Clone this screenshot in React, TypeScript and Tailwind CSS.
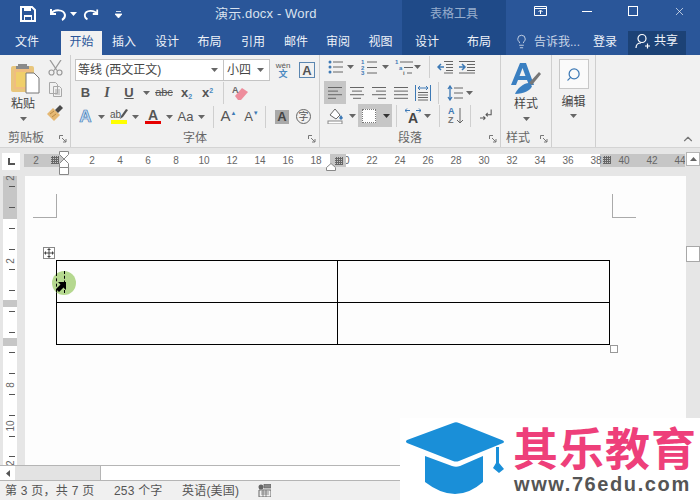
import { ChevronUp, Lightbulb, Search, X } from "lucide-react";

const tabs = [
  { name: "插入", w: "w-[44px]" },
  { name: "设计", w: "w-[42px]" },
  { name: "布局", w: "w-[43px]" },
  { name: "引用", w: "w-[44px]" },
  { name: "邮件", w: "w-[42px]" },
  { name: "审阅", w: "w-[42px]" },
  { name: "视图", w: "w-[43px]" },
];

const rulerNumbers = ["2", "", "2", "4", "6", "8", "10", "12", "14", "16", "18", "20", "22", "24", "26", "28", "30", "32", "34", "36", "38", "40", "42", "44"];

function Caret({ color = "#666666" }: { color?: string }) {
  return (
    <svg width="7" height="4" viewBox="0 0 7 4">
      <path d="M0 0h7L3.5 4z" fill={color} />
    </svg>
  );
}

function Launcher() {
  return (
    <svg width="8" height="8" viewBox="0 0 8 8" className="absolute right-[3px] top-[6px]">
      <path d="M.5 4V.5H4" fill="none" stroke="#777777" />
      <path d="M3 3l4 4M7 4v3H4" fill="none" stroke="#777777" />
    </svg>
  );
}

function Sep({ className = "" }: { className?: string }) {
  return <div className={`h-[22px] w-px bg-[#cfcfcf] ${className}`} />;
}

function Bars({ lines, color = "#666666" }: { lines: number[][]; color?: string }) {
  return (
    <svg width="16" height="14" viewBox="0 0 16 14">
      {lines.map(([a, b], i) => (
        <rect key={i} x={a} y={1 + i * 3.6} width={b - a} height="1" fill={color} />
      ))}
    </svg>
  );
}

function GridMark() {
  return (
    <svg width="8" height="8" viewBox="0 0 8 8">
      <path d="M1.5 0v8M3.5 0v8M5.5 0v8M7.5 0v8M0 1.5h8M0 3.5h8M0 5.5h8M0 7.5h8" stroke="#666666" strokeWidth="1" />
    </svg>
  );
}

function Logo() {
  return (
    <div className="absolute bottom-0 right-0 flex h-[82px] w-[300px] bg-white">
      <svg width="108" height="82" viewBox="0 0 108 82" className="ml-[3px] shrink-0">
        <path d="M4 22Q2 23.500 4 25L50 43Q53 44 56 43L100 25Q102 24 100 22.500L56 5Q53 3.500 50 5z" fill="#1a8fd8" />
        <path d="M22 38L49 48Q53 49.500 57 48L80 38V64Q53 88 22 64z" fill="#1a8fd8" />
        <path d="M93 29h3v16l5 6-5 4-6-5 3-5z" fill="#1a8fd8" />
      </svg>
      <div className="ml-[2px] flex flex-col pt-[3px]">
        <div className="h-[52px] font-['Noto_Sans_CJK_SC',sans-serif] text-[45px] font-bold leading-[52px] tracking-[1px] whitespace-nowrap text-[#ee3f7a]">
          其乐教育
        </div>
        <div className="mt-[1px] h-[20px] pl-[1px] text-[20px] font-bold leading-[20px] tracking-[1.6px] whitespace-nowrap text-[#555555]">
          www.76edu.com
        </div>
      </div>
    </div>
  );
}

function TitleBar() {
  return (
    <div className="flex h-[27px] bg-[#2a5699] text-[#d9e2ee]">
      <div className="flex w-[402px] items-center">
        <svg width="16" height="16" viewBox="0 0 16 16" className="ml-[20px]">
          <path d="M1 1h11l3 3v11H1z" fill="none" stroke="#ffffff" strokeWidth="2" />
          <path d="M4 1h7v4H4zM4 9h8v6H4z" fill="#ffffff" />
          <path d="M5 11h6v3H5z" fill="#2a5699" />
        </svg>
        <svg width="18" height="14" viewBox="0 0 18 14" className="ml-[13px]">
          <path d="M2 2v5h5M2 7c3-5 13-5 14 1 0 2-1 4-3 5" fill="none" stroke="#ffffff" strokeWidth="2" />
        </svg>
        <div className="ml-[3px]"><Caret color="#ffffff" /></div>
        <svg width="16" height="14" viewBox="0 0 18 14" className="ml-[6px]">
          <path d="M16 2v5h-5M16 7c-3-5-13-5-14 1 0 2 1 4 3 5" fill="none" stroke="#ffffff" strokeWidth="2" />
        </svg>
        <svg width="7" height="8" viewBox="0 0 7 8" className="ml-[16px] mt-[2px]">
          <path d="M1 .5h5M0 3h7L3.500 7z" stroke="#ffffff" fill="#ffffff" strokeWidth=".8" />
        </svg>
        <span className="ml-[93px] whitespace-nowrap text-[13px] tracking-[.15px]">演示.docx - Word</span>
      </div>
      <div className="flex w-[104px] items-center justify-center bg-[#1f4a88] text-[12px] text-[#97aecd]">
        表格工具
      </div>
      <div className="flex flex-1 items-center text-white">
        <svg width="13" height="11" viewBox="0 0 13 11" className="ml-[28px] mb-[5px]">
          <path d="M.5.5h12v9H.5zM.5 2.500h12M6.500 8V4.500M4.500 6l2-2 2 2" fill="none" stroke="#ffffff" />
        </svg>
        <div className="ml-[35px] mb-[5px] h-px w-[10px] bg-white" />
        <div className="ml-[36px] mb-[5px] h-[10px] w-[10px] border border-white" />
        <X size={13} strokeWidth={1.2} className="ml-[35px] mb-[5px]" />
      </div>
    </div>
  );
}

function TabBar() {
  return (
    <div className="flex h-[28px] bg-[#2a5699] text-[12px] text-[#eef2f8]">
      <div className="w-[54px] pt-[6px] text-center">文件</div>
      <div className="w-[7px]" />
      <div className="mt-[4px] h-[24px] w-[41px] bg-[#f1f1f1] pt-[2px] text-center text-[#2a5699]">开始</div>
      {tabs.map((tab) => (
        <div key={tab.name} className={`${tab.w} pt-[6px] text-center`}>
          {tab.name}
        </div>
      ))}
      <div className="flex w-[104px] bg-[#1f4a88]">
        <div className="w-[50px] pt-[6px] text-center">设计</div>
        <div className="w-[54px] pt-[6px] text-center">布局</div>
      </div>
      <div className="flex flex-1 items-start">
        <Lightbulb size={15} strokeWidth={1.3} className="ml-[8px] mt-[7px] text-[#dfe6f0]" />
        <span className="ml-[5px] w-[46px] pt-[6px] whitespace-nowrap text-[#c8d4e6]">告诉我...</span>
        <span className="ml-[13px] w-[24px] pt-[6px] whitespace-nowrap">登录</span>
        <div className="ml-[11px] mt-[4px] flex h-[24px] w-[58px] items-center bg-[#1c4276] pb-[4px]">
          <svg width="16" height="16" viewBox="0 0 16 16" className="ml-[7px]">
            <circle cx="7" cy="5.500" r="4" fill="none" stroke="#ffffff" strokeWidth="1.200" />
            <path d="M1 15c0-3 2-5 5-5M10 13h5M12.500 10.500v5" fill="none" stroke="#ffffff" strokeWidth="1.200" />
          </svg>
          <span className="ml-[3px] whitespace-nowrap">共享</span>
        </div>
      </div>
    </div>
  );
}

function ClipboardGroup() {
  return (
    <div className="flex w-[71px] flex-col border-r border-[#cfcfcf]">
      <div className="flex flex-1">
        <div className="flex w-[46px] flex-col items-center pt-[8px]">
          <svg width="30" height="31" viewBox="0 0 30 31" className="ml-[4px]">
            <rect x="1" y="3" width="23" height="26" rx="2" fill="#e8c67c" />
            <rect x="4" y="6" width="17" height="20" fill="#f0bd80" />
            <rect x="6" y="9" width="12" height="15" fill="#f0cf6a" />
            <path d="M8 3V1h9v2h2v3H6V3z" fill="#8a8a8a" />
            <path d="M16 10h8l5 5v15H16z" fill="#ffffff" stroke="#777777" />
          </svg>
          <span className="mt-[1px] text-[12px] leading-[18px] text-[#444444]">粘贴</span>
          <div className="mt-[4px]"><Caret /></div>
        </div>
        <div className="flex w-[18px] flex-col items-center pt-[5px]">
          <svg width="15" height="16" viewBox="0 0 15 16">
            <circle cx="3.500" cy="12.500" r="2.500" fill="none" stroke="#9a9a9a" strokeWidth="1.200" />
            <circle cx="11.500" cy="12.500" r="2.500" fill="none" stroke="#9a9a9a" strokeWidth="1.200" />
            <path d="M2 0l7 10.500M13 0L6 10.500" stroke="#9a9a9a" strokeWidth="1.300" />
          </svg>
          <svg width="15" height="15" viewBox="0 0 15 15" className="mt-[6px]">
            <path d="M1.500.5h6l2 2v9h-8zM5.500 4.500h6l2 2v8h-8z" fill="#f1f1f1" stroke="#a8a8a8" />
            <path d="M7 8h5M7 10h5M7 12h5" stroke="#a8a8a8" />
          </svg>
          <svg width="16" height="16" viewBox="0 0 16 16" className="mt-[8px]">
            <path d="M0 9l6-6 7 7-6 6z" fill="#e5b873" />
            <path d="M3 9l4-3M5 12l4-3" stroke="#b98a45" />
            <path d="M8 5l5-5 3 3-5 5z" fill="#4a4a4a" />
          </svg>
        </div>
      </div>
      <div className="relative h-[18px] pl-[8px] text-[12px] leading-[18px] text-[#666666]">
        剪贴板
        <Launcher />
      </div>
    </div>
  );
}

function FontGroup() {
  const a = "font-bold text-[#555555]";
  return (
    <div className="flex w-[249px] flex-col border-r border-[#cfcfcf]">
      <div className="flex flex-1 flex-col pl-[4px] pt-[4px]">
        <div className="flex h-[22px] items-center">
          <div className="flex h-[22px] w-[149px] items-center justify-between border border-[#c4c4c4] bg-white px-[2px] text-[12px] text-[#444444]">
            <span className="whitespace-nowrap">等线 (西文正文)</span>
            <span className="pr-[3px]"><Caret /></span>
          </div>
          <div className="-ml-px flex h-[22px] w-[47px] items-center justify-between border border-[#c4c4c4] bg-white px-[3px] text-[12px] text-[#444444]">
            <span>小四</span>
            <span className="pr-[2px]"><Caret /></span>
          </div>
          <div className="ml-[2px] flex w-[22px] flex-col items-center text-[#555555]">
            <span className="text-[8px] leading-[9px]">wén</span>
            <span className="text-[9px] font-bold leading-[9px] text-[#4a89c0]">文</span>
          </div>
          <div className="ml-[5px] flex h-[16px] w-[16px] items-center justify-center border border-[#5b86b0] text-[13px] font-bold leading-none text-[#555555]">A</div>
        </div>
        <div className="flex h-[23px] items-center text-[13px] text-[#555555]">
          <span className={`w-[21px] text-center ${a}`}>B</span>
          <span className="w-[22px] text-center font-['Liberation_Serif',serif] text-[14px] font-bold italic">I</span>
          <span className={`w-[22px] text-center underline ${a}`}>U</span>
          <span className="flex w-[12px] justify-center"><Caret /></span>
          <span className="w-[24px] text-center text-[11px] line-through">abc</span>
          <span className={`w-[21px] text-center ${a}`}>x<sub className="text-[7px] text-[#4a89c0]">2</sub></span>
          <span className={`w-[21px] text-center ${a}`}>x<sup className="text-[7px] text-[#4a89c0]">2</sup></span>
          <Sep className="ml-[5px]" />
          <svg width="16" height="16" viewBox="0 0 16 16" className="ml-[8px]">
            <path d="M3 11l7-8 6 4-7 8-3 0z" fill="#ee8d9c" />
            <text x="0" y="8" fontSize="9" fill="#666666" fontWeight="bold">A</text>
          </svg>
        </div>
        <div className="mt-[1px] flex h-[23px] items-center text-[#555555]">
          <span className="w-[21px] text-center text-[17px] font-bold leading-none text-[#c3dbf2] [-webkit-text-stroke:0.7px_#3d79b5]">A</span>
          <span className="flex w-[10px] justify-center"><Caret /></span>
          <span className="relative flex w-[25px] flex-col items-center">
            <span className="pr-[6px] text-[10px] leading-[11px] text-[#555555]">ab</span>
            <span className="h-[4px] w-[16px] bg-[#ffff00]" />
            <svg width="9" height="11" viewBox="0 0 9 11" className="absolute right-[3px] top-0">
              <path d="M1 10l1-3 5-7 2 1-5 7z" fill="#555555" />
            </svg>
          </span>
          <span className="flex w-[9px] justify-center"><Caret /></span>
          <span className="ml-[1px] flex w-[24px] flex-col items-center">
            <span className="text-[14px] font-bold leading-[12px]">A</span>
            <span className="h-[3px] w-[16px] bg-[#e60000]" />
          </span>
          <span className="flex w-[9px] justify-center"><Caret /></span>
          <span className="w-[23px] text-center text-[13px]">Aa</span>
          <span className="flex w-[9px] justify-center"><Caret /></span>
          <Sep className="ml-[7px]" />
          <span className="ml-[4px] w-[21px] text-center text-[15px]">A<span className="relative -top-[6px] text-[6px] text-[#3d79b5]">▲</span></span>
          <span className="ml-[2px] w-[21px] text-center text-[13px]">A<span className="relative -top-[6px] text-[6px] text-[#3d79b5]">▼</span></span>
          <Sep className="ml-[3px]" />
          <span className="ml-[9px] h-[14px] w-[14px] bg-[#a9a9a9] text-center text-[13px] font-bold leading-[14px] text-[#444444]">A</span>
          <span className="ml-[7px] h-[15px] w-[15px] rounded-full border border-[#666666] text-center text-[10px] leading-[13px]">字</span>
        </div>
      </div>
      <div className="relative h-[18px] text-center text-[12px] leading-[18px] text-[#666666]">
        字体
        <Launcher />
      </div>
    </div>
  );
}

function ParagraphGroup() {
  return (
    <div className="flex w-[181px] flex-col border-r border-[#cfcfcf]">
      <div className="flex flex-1 flex-col pl-[4px] pt-[1px]">
        <div className="flex h-[22px] items-center">
          <svg width="16" height="14" viewBox="0 0 16 14" className="ml-[4px]">
            <path d="M5 2h10M5 7h10M5 12h10" stroke="#666666" />
            <circle cx="2" cy="2" r="1.500" fill="#3d79b5" /><circle cx="2" cy="7" r="1.500" fill="#3d79b5" /><circle cx="2" cy="12" r="1.500" fill="#3d79b5" />
          </svg>
          <span className="ml-[3px]"><Caret /></span>
          <svg width="16" height="16" viewBox="0 0 16 16" className="ml-[7px]">
            <text x="0" y="5" fontSize="6" fill="#3d79b5" fontWeight="bold">1</text>
            <text x="0" y="10.500" fontSize="6" fill="#3d79b5" fontWeight="bold">2</text>
            <text x="0" y="16" fontSize="6" fill="#3d79b5" fontWeight="bold">3</text>
            <path d="M6 3h10M6 8.500h10M6 14h10" stroke="#666666" />
          </svg>
          <span className="ml-[5px]"><Caret /></span>
          <svg width="18" height="16" viewBox="0 0 18 16" className="ml-[6px]">
            <text x="0" y="5" fontSize="6" fill="#3d79b5" fontWeight="bold">1</text>
            <text x="4" y="10.500" fontSize="6" fill="#3d79b5" fontWeight="bold">a</text>
            <text x="8" y="16" fontSize="6" fill="#666666" fontWeight="bold">i</text>
            <path d="M5 3h13M9 8.500h9M12 14h5" stroke="#666666" />
          </svg>
          <span className="ml-[1px]"><Caret /></span>
          <Sep className="ml-[8px]" />
          <svg width="16" height="14" viewBox="0 0 16 14" className="ml-[7px]">
            <path d="M7 1.500h9M9 4.500h7M9 7.500h7M9 10.500h7M7 13h9" stroke="#666666" />
            <path d="M7 7H1M4 4L1 7l3 3" fill="none" stroke="#3d79b5" strokeWidth="1.500" />
          </svg>
          <svg width="16" height="14" viewBox="0 0 16 14" className="ml-[6px]">
            <path d="M0 1.500h16M8 4.500h8M8 7.500h8M8 10.500h8M0 13h16" stroke="#666666" />
            <path d="M0 7h6M3 4l3 3-3 3" fill="none" stroke="#3d79b5" strokeWidth="1.500" />
          </svg>
        </div>
        <div className="mt-[3px] flex h-[23px] items-center">
          <div className="flex h-[23px] w-[22px] items-center justify-center bg-[#c6c6c6]">
            <Bars lines={[[1, 15], [1, 11], [1, 15], [1, 9]]} />
          </div>
          <div className="flex w-[22px] justify-center"><Bars lines={[[1, 15], [3, 13], [1, 15], [4, 12]]} /></div>
          <div className="flex w-[22px] justify-center"><Bars lines={[[1, 15], [5, 15], [1, 15], [7, 15]]} /></div>
          <div className="flex w-[22px] justify-center"><Bars lines={[[1, 15], [1, 15], [1, 15], [1, 15]]} /></div>
          <svg width="16" height="16" viewBox="0 0 16 16" className="ml-[3px]">
            <path d="M.5 0v16M15.500 0v16" stroke="#3d79b5" />
            <path d="M3 3h10M5 1L3 3l2 2M11 1l2 2-2 2" fill="none" stroke="#3d79b5" />
            <path d="M3 7.500h10M3 10h10M3 12.500h10M3 15h10" stroke="#666666" />
          </svg>
          <Sep className="ml-[7px]" />
          <svg width="16" height="16" viewBox="0 0 16 16" className="ml-[8px]">
            <path d="M7 3h9M7 8h9M7 13h9" stroke="#666666" />
            <path d="M3 1v14M1 4l2-3 2 3M1 12l2 3 2-3" fill="none" stroke="#3d79b5" strokeWidth="1.300" />
          </svg>
          <span className="ml-[3px]"><Caret /></span>
        </div>
        <div className="flex h-[23px] items-center">
          <svg width="17" height="17" viewBox="0 0 17 17" className="ml-[3px]">
            <path d="M3 8l5-6 5 6-4 4z" fill="#ffffff" stroke="#666666" />
            <path d="M14 8l2 3-2 2-2-2z" fill="#3d79b5" />
            <rect x="1" y="14" width="14" height="3" fill="#ffffff" stroke="#888888" />
          </svg>
          <span className="ml-[5px]"><Caret /></span>
          <div className="ml-[2px] flex h-[23px] w-[34px] items-center gap-[7px] bg-[#c6c6c6] pl-[4px]">
            <div className="h-[14px] w-[14px] border border-dotted border-[#777777] bg-white" />
            <Caret color="#333333" />
          </div>
          <Sep className="ml-[4px]" />
          <div className="ml-[8px] flex w-[16px] flex-col items-center">
            <svg width="16" height="5" viewBox="0 0 16 5">
              <path d="M0 2.500h5M2 .5L0 2.500l2 2M16 2.500h-5M14 .5l2 2-2 2" fill="none" stroke="#3d79b5" />
            </svg>
            <span className="text-[14px] font-bold leading-[11px] text-[#444444]">A</span>
          </div>
          <span className="ml-[3px]"><Caret /></span>
          <Sep className="ml-[8px]" />
          <div className="ml-[8px] flex items-center">
            <div className="flex flex-col text-[9px] font-bold leading-[9px] text-[#3d79b5]">
              <span>A</span>
              <span className="text-[#777777]">Z</span>
            </div>
            <svg width="6" height="16" viewBox="0 0 6 16" className="ml-[2px]">
              <path d="M3 0v15M0 12l3 3 3-3" fill="none" stroke="#666666" />
            </svg>
          </div>
          <Sep className="ml-[7px]" />
          <svg width="12" height="13" viewBox="0 0 14 14" className="ml-[9px]">
            <path d="M13 0v6H7M9 4L7 6l2 2M0 10h6M4 8l2 2-2 2" fill="none" stroke="#555555" strokeWidth="1.200" />
          </svg>
        </div>
      </div>
      <div className="relative h-[18px] text-center text-[12px] leading-[18px] text-[#666666]">
        段落
        <Launcher />
      </div>
    </div>
  );
}

function StylesGroup() {
  return (
    <div className="flex w-[51px] flex-col border-r border-[#cfcfcf]">
      <div className="flex flex-1 flex-col items-center pt-[8px]">
        <svg width="30" height="31" viewBox="0 0 30 31">
          <path d="M0 22L9 0h6l8 22h-5l-2-5H7l-2 5zM8.500 13h6l-3-8z" fill="#3a7fc1" />
          <path d="M18 20L28 9l2 2-9 11z" fill="#777777" />
          <path d="M4 31c2-5 8-11 14-11l3 3c-1 4-8 8-17 8z" fill="#3a7fc1" />
        </svg>
        <span className="mt-[1px] text-[12px] leading-[18px] text-[#444444]">样式</span>
        <div className="mt-[4px]"><Caret /></div>
      </div>
      <div className="relative h-[18px] pl-[5px] text-[12px] leading-[18px] text-[#666666]">
        样式
        <Launcher />
      </div>
    </div>
  );
}

function EditGroup() {
  return (
    <div className="flex w-[44px] flex-col border-r border-[#cfcfcf]">
      <div className="flex flex-col items-center pt-[4px]">
        <div className="flex h-[30px] w-[30px] items-center justify-center border border-[#c8c8c8] bg-[#fafafa]">
          <Search size={15} strokeWidth={2} className="-scale-x-100 text-[#3d79b5]" />
        </div>
        <span className="mt-[4px] text-[12px] leading-[18px] text-[#444444]">编辑</span>
        <div className="mt-[3px]"><Caret /></div>
      </div>
    </div>
  );
}

function Ribbon() {
  return (
    <div className="flex h-[93px] border-b border-[#d4d4d4] bg-[#f1f1f1]">
      <ClipboardGroup />
      <FontGroup />
      <ParagraphGroup />
      <StylesGroup />
      <EditGroup />
      <div className="flex flex-1 items-end justify-end pb-[1px] pr-[5px]">
        <ChevronUp size={14} strokeWidth={2} className="text-[#777777]" />
      </div>
    </div>
  );
}

function RulerRow() {
  return (
    <div className="flex h-[28px] bg-[#e6e6e6]">
      <div className="ml-[2px] mt-[5px] flex h-[17px] w-[18px] items-center justify-center bg-white">
        <svg width="7" height="7" viewBox="0 0 7 7">
          <path d="M1 0v6h6" fill="none" stroke="#555555" strokeWidth="2" />
        </svg>
      </div>
      <div className="relative ml-[4px] mt-[6px] h-[13px] w-[661px] overflow-hidden text-[10px] leading-[13px] text-[#666666]">
        <div className="flex h-full">
          <div className="w-[40px] bg-[#c6c6c6]" />
          <div className="w-[266px] bg-white" />
          <div className="w-[16px] bg-[#c6c6c6]" />
          <div className="w-[254px] bg-white" />
          <div className="flex-1 bg-[#c6c6c6]" />
        </div>
        <div className="absolute inset-0 -ml-[2px] flex">
          {rulerNumbers.map((n, i) => (
            <span key={i} className="w-[28px] shrink-0 text-center">{n}</span>
          ))}
        </div>
        <div className="absolute left-[27px] top-[2px]"><GridMark /></div>
        <div className="absolute left-[308px] top-0 flex h-[13px] w-[14px] items-center justify-center bg-[#c6c6c6]"><GridMark /></div>
        <div className="absolute left-[579px] top-[2px]"><GridMark /></div>
      </div>
      <svg width="11" height="25" viewBox="0 0 11 25" className="absolute left-[59px] top-[151px]">
        <path d="M.5.500h9v3L5 8 .5 3.500zM5 8l4.500 4.500v4h-9v-4z" fill="#ffffff" stroke="#888888" />
        <path d="M.5 16.500h9v7h-9z" fill="#ffffff" stroke="#888888" />
      </svg>
      <svg width="10" height="8" viewBox="0 0 10 8" className="absolute left-[326px] top-[163px]">
        <path d="M.5 7.500v-3L5 .5l4.500 4v3z" fill="#ffffff" stroke="#888888" />
      </svg>
      <div className="ml-[1px] mt-[4px] flex h-[14px] w-[14px] items-center justify-center border border-[#b5b5b5] bg-white">
        <svg width="7" height="4" viewBox="0 0 7 4"><path d="M0 4h7L3.500 0z" fill="#666666" /></svg>
      </div>
    </div>
  );
}

function VerticalRuler() {
  const ticks = [186, 207, 228, 249, 269, 290, 311, 332, 352, 373, 394, 415, 436, 456];
  const labels = [
    { y: 178, t: "2" },
    { y: 261, t: "2" },
    { y: 385, t: "8" },
    { y: 426, t: "10" },
    { y: 466, t: "12" },
  ];
  return (
    <div className="relative ml-[3px] h-full w-[14px] shrink-0">
      <div className="flex h-full flex-col">
        <div className="h-[43px] bg-[#c6c6c6]" />
        <div className="h-[81px] bg-white" />
        <div className="h-[7px] bg-[#c6c6c6]" />
        <div className="h-[31px] bg-white" />
        <div className="h-[8px] bg-[#c6c6c6]" />
        <div className="flex-1 bg-white" />
      </div>
      <svg width="14" height="289" viewBox="0 176 14 289" className="absolute inset-0">
        {ticks.map((y) => (
          <rect key={y} x="6" y={y} width="6" height="1" fill="#555555" />
        ))}
        {labels.map((l) => (
          <text key={l.y} x="11" y={l.y} fontSize="10" fill="#666666" textAnchor="middle" transform={`rotate(-90 11 ${l.y})`}>
            {l.t}
          </text>
        ))}
      </svg>
    </div>
  );
}

function CropMark({ side }: { side: "left" | "right" }) {
  return side === "left" ? (
    <div className="h-[24px] w-[24px] border-b border-r border-[#aaaaaa]" />
  ) : (
    <div className="h-[24px] w-[24px] border-b border-l border-[#aaaaaa]" />
  );
}

function DocTable() {
  return (
    <div className="relative ml-[31px] mt-[42px] w-[554px]">
      <div className="grid grid-cols-[281px_1fr] grid-rows-[42px_41px] border border-black">
        <div className="border-b border-r border-black" />
        <div className="border-b border-black" />
        <div className="border-r border-black" />
        <div />
      </div>
      <div className="absolute -left-[13px] -top-[13px] flex h-[12px] w-[12px] items-center justify-center border border-[#888888] bg-white">
        <svg width="10" height="10" viewBox="0 0 10 10">
          <path d="M5 1v8M1 5h8" fill="none" stroke="#444444" />
          <path d="M5 0l2 2H3zM5 10L3 8h4zM0 5l2-2v4zM10 5L8 3v4z" fill="#444444" />
        </svg>
      </div>
      <div className="absolute -bottom-[8px] -right-[8px] h-[8px] w-[8px] border border-[#999999] bg-white" />
      <div className="absolute left-[-4px] top-[11px] h-[24px] w-[24px] rounded-full bg-[#b5d88f]" />
      <div className="absolute left-[8px] top-[11px] h-[22px] border-l border-dashed border-black" />
      <div className="absolute left-[0px] top-[13px] h-[19px] border-l border-dashed border-black" />
      <svg width="11" height="11" viewBox="0 0 11 11" className="absolute left-[0px] top-[21px]">
        <path d="M10 1v8L7.500 6.500 3 11 0 8l4.500-4.500L2 1z" fill="#000000" />
      </svg>
    </div>
  );
}

function DocBody() {
  return (
    <div className="flex h-[289px] bg-[#e6e6e6]">
      <VerticalRuler />
      <div className="ml-[8px] h-full w-[661px] overflow-hidden bg-[#fdfdfd]">
        <div className="flex justify-between pl-[8px] pr-[50px] pt-[18px]">
          <CropMark side="left" />
          <CropMark side="right" />
        </div>
        <DocTable />
      </div>
      <div className="w-[14px] pt-[70px]">
        <div className="h-[16px] w-[14px] border border-[#a8a8a8] bg-white" />
      </div>
    </div>
  );
}

function HScroll() {
  return (
    <div className="flex h-[16px] border-y border-[#b5b5b5] bg-[#e3e3e3]">
      <div className="flex w-[15px] items-center justify-center bg-white">
        <svg width="4" height="7" viewBox="0 0 4 7"><path d="M4 0v7L0 3.500z" fill="#555555" /></svg>
      </div>
      <div className="w-[85px]" />
      <div className="w-[300px] border-l border-[#b5b5b5] bg-white" />
    </div>
  );
}

function StatusBar() {
  return (
    <div className="flex h-[19px] items-center bg-[#f0f0f0] text-[12px] text-[#555555]">
      <span className="ml-[5px] w-[109px] whitespace-nowrap tracking-[.25px]">第 3 页，共 7 页</span>
      <span className="w-[68px] whitespace-nowrap tracking-[.2px]">253 个字</span>
      <span className="w-[76px] whitespace-nowrap tracking-[.2px]">英语(美国)</span>
      <svg width="13" height="13" viewBox="0 0 13 13">
        <circle cx="3" cy="3" r="2.500" fill="#666666" />
        <path d="M1 6h12v7H1z" fill="none" stroke="#666666" />
        <path d="M6 0h7v4H6zM3 8h8M3 10h8M5 6v7M8 6v7" stroke="#666666" fill="#888888" strokeWidth=".7" />
      </svg>
    </div>
  );
}

export default function App() {
  return (
    <div className="relative h-[500px] w-[700px] overflow-hidden bg-[#f1f1f1] font-['Liberation_Sans','Noto_Sans_CJK_SC',sans-serif]">
      <TitleBar />
      <TabBar />
      <Ribbon />
      <RulerRow />
      <DocBody />
      <HScroll />
      <StatusBar />
      <Logo />
    </div>
  );
}
